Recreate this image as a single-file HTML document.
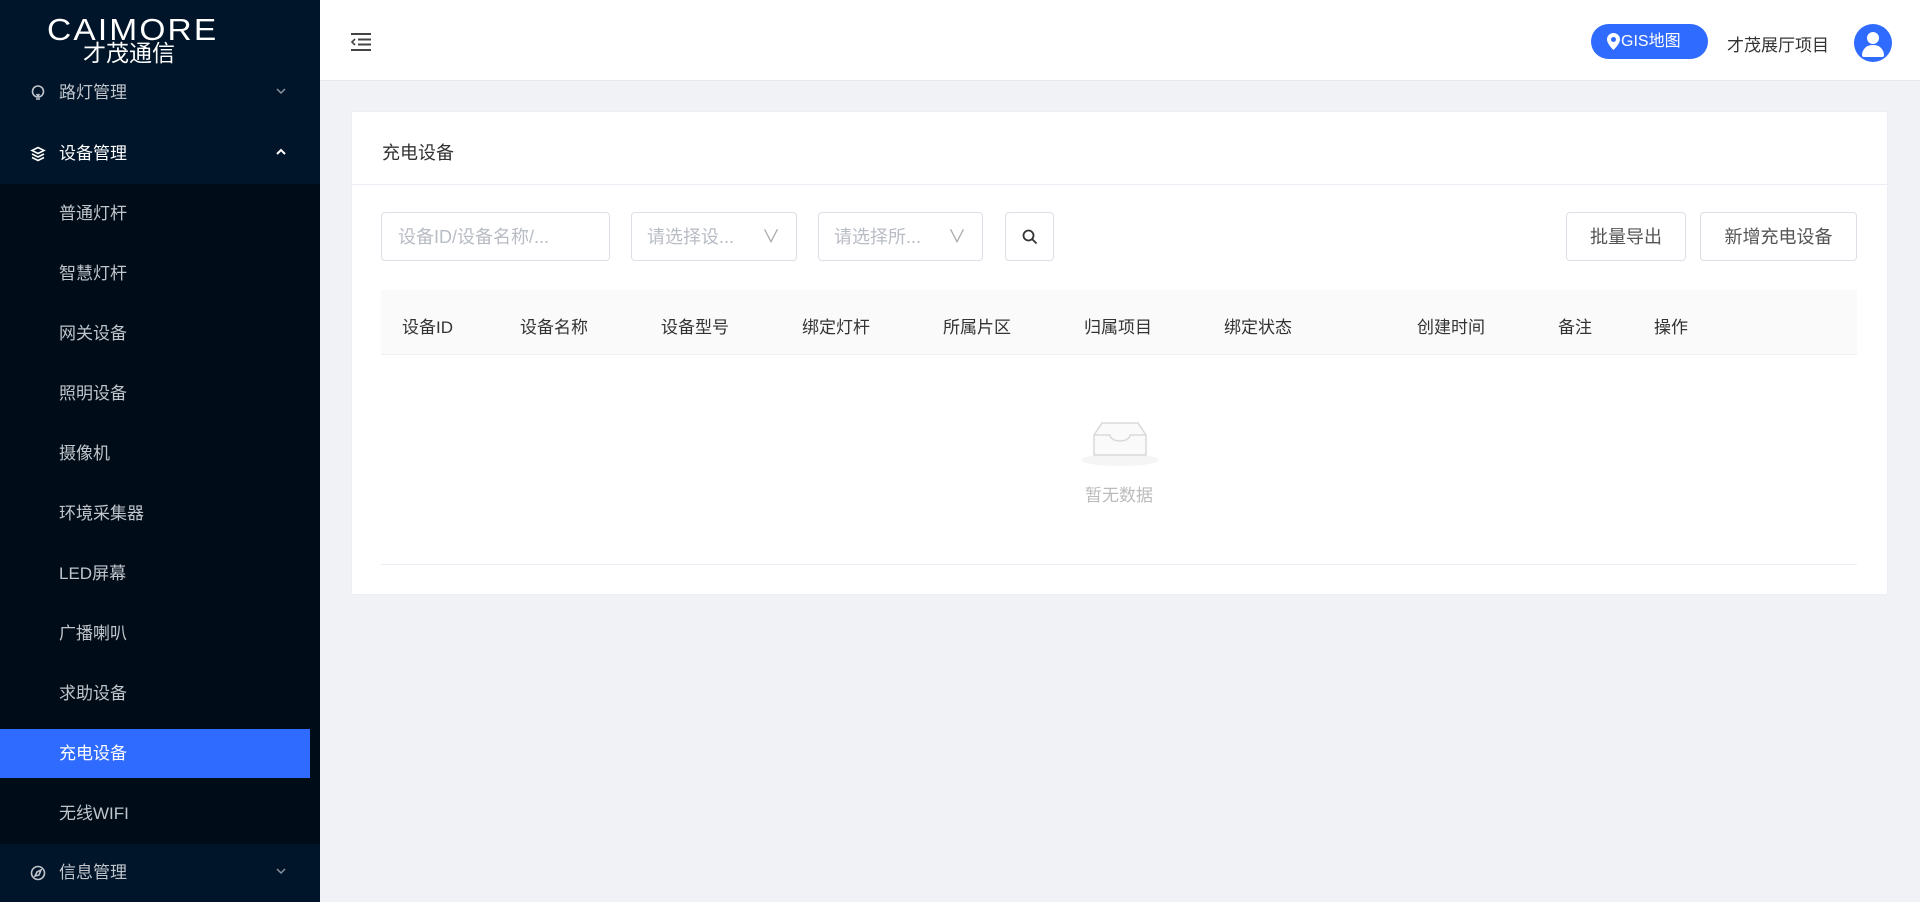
<!DOCTYPE html>
<html><head><meta charset="utf-8"><style>
*{margin:0;padding:0;box-sizing:border-box}
body{width:1920px;height:902px;overflow:hidden;background:#f0f2f5;font-family:"Liberation Sans","Noto Sans CJK SC",sans-serif;position:relative}
.side{position:absolute;left:0;top:0;width:320px;height:902px;background:#001529;color:#c0c5cc}
.sub{position:absolute;left:0;top:184px;width:320px;height:660px;background:#000c17}
.mi{position:absolute;left:0;width:320px;font-size:17px;line-height:20px}
.act{position:absolute;left:0;top:729px;width:310px;height:49px;background:#2f6bff}
.hd{position:absolute;left:320px;top:0;width:1600px;height:81px;background:#fff;border-bottom:1px solid #e8e8e8}
.card{position:absolute;left:351px;top:111px;width:1537px;height:484px;background:#fff;border:1px solid #ebeef5;border-radius:3px}
.box{position:absolute;border:1px solid #dcdfe6;border-radius:4px;background:#fff;font-size:18px;color:#b8bcc4;line-height:48px}
.th{position:absolute;top:313px;font-size:17px;color:#333}
.chev{position:absolute;left:276px;top:4px}
</style></head><body>
<div class="side">
 <div style="position:absolute;left:47px;top:14px;color:#fff;font-size:31px;letter-spacing:2px;line-height:32px;transform:scaleX(1.08);transform-origin:left">CAIMORE</div>
 <div style="position:absolute;left:83px;top:40px;color:#fff;font-size:23px;line-height:26px">才茂通信</div>
 <div class="mi" style="top:83px"><svg style="position:absolute;left:30px;top:2px" width="16" height="16" viewBox="0 0 16 16" fill="none" stroke="#c0c5cc" stroke-width="1.6"><circle cx="8" cy="6.5" r="5.5"/><path d="M6 14h4M6.5 9l1.5 2 1.5-2"/></svg><span style="position:absolute;left:59px">路灯管理</span><svg class="chev" width="10" height="8" viewBox="0 0 10 8" fill="none" stroke="#8a93a0" stroke-width="1.5"><path d="M1 2l4 4 4-4"/></svg></div>
 <div class="mi" style="top:144px;color:#fff"><svg style="position:absolute;left:30px;top:2px" width="16" height="16" viewBox="0 0 16 16" fill="none" stroke="#fff" stroke-width="1.6"><path d="M8 1.5l6 3-6 3-6-3z M2 8l6 3 6-3M2 11.5l6 3 6-3"/></svg><span style="position:absolute;left:59px">设备管理</span><svg class="chev" width="10" height="8" viewBox="0 0 10 8" fill="none" stroke="#fff" stroke-width="2"><path d="M1 6l4-4 4 4"/></svg></div>
 <div class="sub"></div>
 <div class="act"></div>
 <div class="mi" style="top:204px;left:59px">普通灯杆</div>
 <div class="mi" style="top:264px;left:59px">智慧灯杆</div>
 <div class="mi" style="top:324px;left:59px">网关设备</div>
 <div class="mi" style="top:384px;left:59px">照明设备</div>
 <div class="mi" style="top:444px;left:59px">摄像机</div>
 <div class="mi" style="top:504px;left:59px">环境采集器</div>
 <div class="mi" style="top:564px;left:59px">LED屏幕</div>
 <div class="mi" style="top:624px;left:59px">广播喇叭</div>
 <div class="mi" style="top:684px;left:59px">求助设备</div>
 <div class="mi" style="top:744px;left:59px;color:#fff">充电设备</div>
 <div class="mi" style="top:804px;left:59px">无线WIFI</div>
 <div class="mi" style="top:863px"><svg style="position:absolute;left:30px;top:2px" width="16" height="16" viewBox="0 0 16 16" fill="none" stroke="#c0c5cc" stroke-width="1.6"><circle cx="8" cy="8" r="6.5"/><path d="M11 5l-2 5-4 1 2-4z"/></svg><span style="position:absolute;left:59px">信息管理</span><svg class="chev" width="10" height="8" viewBox="0 0 10 8" fill="none" stroke="#8a93a0" stroke-width="1.5"><path d="M1 2l4 4 4-4"/></svg></div>
</div>
<div class="hd">
 <svg style="position:absolute;left:30px;top:33px" width="22" height="18" viewBox="0 0 22 18" stroke="#444" stroke-width="2"><path d="M1 1h20M8 6.5h13M8 11.5h13M1 17h20"/><path d="M5 6l-3 3 3 3" fill="none" stroke-width="1.6"/></svg>
 <div style="position:absolute;left:1271px;top:24px;width:117px;height:35px;border-radius:18px;background:#2f6bff;color:#fff;font-size:16px;line-height:35px;padding-left:30px">GIS地图</div>
 <svg style="position:absolute;left:1287px;top:33px" width="13" height="17" viewBox="0 0 13 17"><path d="M6.5 0A6.5 6.5 0 0 0 0 6.5C0 11 6.5 17 6.5 17S13 11 13 6.5A6.5 6.5 0 0 0 6.5 0z" fill="#fff"/><circle cx="6.5" cy="6.5" r="2.5" fill="#2f6bff"/></svg>
 <div style="position:absolute;left:1407px;top:31px;font-size:17px;color:#333">才茂展厅项目</div>
 <div style="position:absolute;left:1534px;top:24px;width:38px;height:38px;border-radius:50%;background:#2f6bff;overflow:hidden"><div style="position:absolute;left:13px;top:8px;width:12px;height:12px;border-radius:50%;background:#fff"></div><div style="position:absolute;left:8px;top:21px;width:22px;height:12px;border-radius:11px 11px 2px 2px;background:#fff"></div></div>
</div>
<div class="card">
 <div style="position:absolute;left:30px;top:27px;font-size:18px;color:#333">充电设备</div>
 <div style="position:absolute;left:0;top:72px;width:100%;border-top:1px solid #ebeef5"></div>
</div>
<div class="box" style="left:381px;top:212px;width:229px;height:49px;padding-left:16px">设备ID/设备名称/...</div>
<div class="box" style="left:631px;top:212px;width:166px;height:49px;padding-left:15px">请选择设...<span style="position:absolute;right:16px;top:0;color:#aaa">&#8744;</span></div>
<div class="box" style="left:818px;top:212px;width:165px;height:49px;padding-left:15px">请选择所...<span style="position:absolute;right:16px;top:0;color:#aaa">&#8744;</span></div>
<div class="box" style="left:1005px;top:212px;width:49px;height:49px"><svg style="position:absolute;left:16px;top:16px" width="16" height="16" viewBox="0 0 16 16" fill="none" stroke="#333" stroke-width="1.8"><circle cx="6.5" cy="6.5" r="5"/><path d="M10 10l4.5 4.5"/></svg></div>
<div class="box" style="left:1566px;top:212px;width:120px;height:49px;color:#555;text-align:center">批量导出</div>
<div class="box" style="left:1700px;top:212px;width:157px;height:49px;color:#555;text-align:center">新增充电设备</div>
<div style="position:absolute;left:381px;top:290px;width:1476px;height:65px;background:#fafafa;border-bottom:1px solid #f0f0f0"></div>
<div class="th" style="left:402px">设备ID</div><div class="th" style="left:520px">设备名称</div><div class="th" style="left:661px">设备型号</div><div class="th" style="left:802px">绑定灯杆</div><div class="th" style="left:943px">所属片区</div><div class="th" style="left:1084px">归属项目</div><div class="th" style="left:1224px">绑定状态</div><div class="th" style="left:1417px">创建时间</div><div class="th" style="left:1558px">备注</div><div class="th" style="left:1654px">操作</div>
<svg style="position:absolute;left:1080px;top:415px" width="80" height="52" viewBox="0 0 80 52"><ellipse cx="40" cy="45" rx="39" ry="6" fill="#f5f5f5"/><path d="M14 20l8-12h36l8 12v20H14z" fill="#fafafa" stroke="#d9d9d9" stroke-width="1.5"/><path d="M14 20h16a10 6 0 0 0 20 0h16" fill="none" stroke="#d9d9d9" stroke-width="1.5"/></svg>
<div style="position:absolute;left:1085px;top:481px;font-size:17px;color:#bbb">暂无数据</div>
<div style="position:absolute;left:381px;top:564px;width:1476px;border-top:1px solid #ebeef5"></div>
</body></html>
